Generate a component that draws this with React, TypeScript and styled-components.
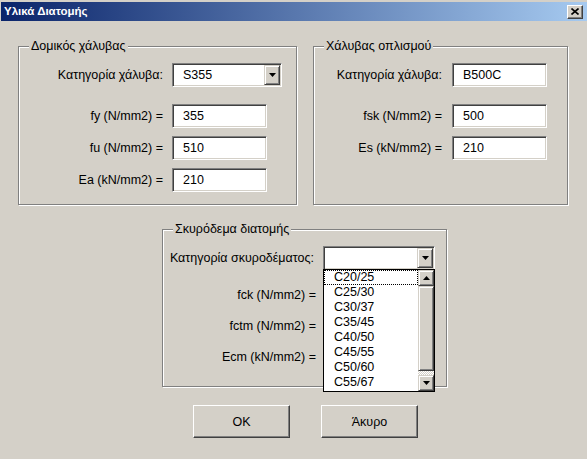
import React from "react";
import styled, { createGlobalStyle } from "styled-components";

const GlobalStyle = createGlobalStyle`
  html, body {
    margin: 0;
    padding: 0;
    background: #d4d0c8;
  }
  body {
    font-family: "Liberation Sans", Arial, sans-serif;
    font-size: 12.5px;
    color: #000;
    overflow: hidden;
  }
`;

const Window = styled.div`
  width: 587px;
  height: 459px;
  box-sizing: border-box;
  padding-top: 2px;
  background: #d4d0c8;
`;

const TitleBar = styled.div`
  height: 19px;
  margin-left: 1px;
  padding: 0 4px 0 3px;
  display: flex;
  align-items: center;
  justify-content: space-between;
  background: linear-gradient(to right, #0a246a, #a6caf0);
`;

const TitleText = styled.span`
  color: #fff;
  font-weight: bold;
  font-size: 11.5px;
  line-height: 19px;
`;

const CloseButton = styled.div`
  width: 16px;
  height: 14px;
  box-sizing: border-box;
  background: #d4d0c8;
  border: 1px solid;
  border-color: #fff #404040 #404040 #fff;
  box-shadow: inset -1px -1px #808080;
  display: flex;
  align-items: center;
  justify-content: center;
`;

const Body = styled.div`
  padding: 18px 0 0 18px;
`;

const TopRow = styled.div`
  display: flex;
  gap: 16px;
`;

const GroupBox = styled.fieldset<{ $w: number; $h: number; $ml?: number; $mt?: number }>`
  width: ${(p) => p.$w}px;
  height: ${(p) => p.$h}px;
  box-sizing: border-box;
  margin: ${(p) => p.$mt ?? 0}px 0 0 ${(p) => p.$ml ?? 0}px;
  padding: 10px 0 0 0;
  min-width: 0;
  border: 1px solid #808080;
  box-shadow: 1px 1px 0 #fff, inset 1px 1px 0 #fff;
`;

const Legend = styled.legend`
  margin-left: 10px;
  padding: 0 2px;
  line-height: 14px;
  background: #d4d0c8;
`;

const Row = styled.div<{ $mt?: number }>`
  display: flex;
  align-items: center;
  height: 24px;
  margin-top: ${(p) => p.$mt ?? 0}px;
`;

const Label = styled.span<{ $w: number; $gap: number }>`
  width: ${(p) => p.$w}px;
  margin-right: ${(p) => p.$gap}px;
  text-align: right;
  white-space: nowrap;
`;

const Sunken = styled.div<{ $w: number }>`
  width: ${(p) => p.$w}px;
  height: 24px;
  box-sizing: border-box;
  background: #fff;
  border: 1px solid;
  border-color: #808080 #fff #fff #808080;
  box-shadow: inset 1px 1px #404040, inset -1px -1px #d4d0c8;
  display: flex;
  align-items: center;
  position: relative;
`;

const Value = styled.span`
  flex: 1;
  padding-left: 10px;
`;

const Raised = styled.div`
  box-sizing: border-box;
  background: #d4d0c8;
  border: 1px solid;
  border-color: #d4d0c8 #404040 #404040 #d4d0c8;
  box-shadow: inset 1px 1px #fff, inset -1px -1px #808080;
  display: flex;
  align-items: center;
  justify-content: center;
`;

const DropButton = styled(Raised)`
  width: 16px;
  height: 20px;
  margin-right: 1px;
`;

const DropList = styled.div`
  position: absolute;
  top: 100%;
  left: -1px;
  width: 112px;
  height: 123px;
  box-sizing: border-box;
  border: 1px solid #000;
  background: #fff;
  display: flex;
  z-index: 5;
`;

const Items = styled.div`
  flex: 1;
  display: flex;
  flex-direction: column;
`;

const Item = styled.div<{ $focused?: boolean }>`
  height: 15px;
  line-height: 15px;
  padding-left: 10px;
  outline: ${(p) => (p.$focused ? "1px dotted #000" : "none")};
  outline-offset: -1px;
`;

const ScrollBar = styled.div`
  width: 16px;
  display: flex;
  flex-direction: column;
`;

const ScrollButton = styled(Raised)`
  height: 16px;
`;

const Thumb = styled(Raised)`
  height: 85px;
`;

const Track = styled.div`
  flex: 1;
  background: repeating-conic-gradient(#fff 0 25%, #d4d0c8 0 50%) 0 0 / 2px 2px;
`;

const ButtonRow = styled.div`
  display: flex;
  gap: 31px;
  margin: 18px 0 0 175px;
`;

const PushButton = styled.div`
  width: 97px;
  height: 33px;
  box-sizing: border-box;
  background: #d4d0c8;
  border: 1px solid;
  border-color: #fff #404040 #404040 #fff;
  box-shadow: inset -1px -1px #808080;
  display: flex;
  align-items: center;
  justify-content: center;
`;

const Arrow = ({ up }: { up?: boolean }) => (
  <svg width="7" height="4" viewBox="0 0 7 4">
    <polygon points={up ? "0,4 7,4 3.5,0" : "0,0 7,0 3.5,4"} fill="#000" />
  </svg>
);

const concrete = ["C20/25", "C25/30", "C30/37", "C35/45", "C40/50", "C45/55", "C50/60", "C55/67"];

export default function App() {
  return (
    <Window>
      <GlobalStyle />
      <TitleBar>
        <TitleText>Υλικά Διατομής</TitleText>
        <CloseButton>
          <svg width="8" height="7" viewBox="0 0 8 7">
            <path d="M0.5 0.5 L7.5 6.5 M7.5 0.5 L0.5 6.5" stroke="#000" strokeWidth="1.6" />
          </svg>
        </CloseButton>
      </TitleBar>
      <Body>
        <TopRow>
          <GroupBox $w={279} $h={166}>
            <Legend>Δομικός χάλυβας</Legend>
            <Row>
              <Label $w={144} $gap={9}>Κατηγορία χάλυβα:</Label>
              <Sunken $w={110}>
                <Value>S355</Value>
                <DropButton>
                  <Arrow />
                </DropButton>
              </Sunken>
            </Row>
            <Row $mt={17}>
              <Label $w={144} $gap={9}>fy (N/mm2) =</Label>
              <Sunken $w={95}>
                <Value>355</Value>
              </Sunken>
            </Row>
            <Row $mt={8}>
              <Label $w={144} $gap={9}>fu (N/mm2) =</Label>
              <Sunken $w={95}>
                <Value>510</Value>
              </Sunken>
            </Row>
            <Row $mt={8}>
              <Label $w={144} $gap={9}>Ea (kN/mm2) =</Label>
              <Sunken $w={95}>
                <Value>210</Value>
              </Sunken>
            </Row>
          </GroupBox>
          <GroupBox $w={255} $h={166}>
            <Legend>Χάλυβας οπλισμού</Legend>
            <Row>
              <Label $w={128} $gap={10}>Κατηγορία χάλυβα:</Label>
              <Sunken $w={95}>
                <Value>B500C</Value>
              </Sunken>
            </Row>
            <Row $mt={17}>
              <Label $w={128} $gap={10}>fsk (N/mm2) =</Label>
              <Sunken $w={95}>
                <Value>500</Value>
              </Sunken>
            </Row>
            <Row $mt={8}>
              <Label $w={128} $gap={10}>Es (kN/mm2) =</Label>
              <Sunken $w={95}>
                <Value>210</Value>
              </Sunken>
            </Row>
          </GroupBox>
        </TopRow>
        <GroupBox $w={285} $h={165} $ml={144} $mt={17}>
          <Legend>Σκυρόδεμα διατομής</Legend>
          <Row>
            <Label $w={151} $gap={9}>Κατηγορία σκυροδέματος:</Label>
            <Sunken $w={112}>
              <Value />
              <DropButton>
                <Arrow />
              </DropButton>
              <DropList>
                <Items>
                  {concrete.map((c, i) => (
                    <Item key={c} $focused={i === 0}>
                      {c}
                    </Item>
                  ))}
                </Items>
                <ScrollBar>
                  <ScrollButton>
                    <Arrow up />
                  </ScrollButton>
                  <Thumb />
                  <Track />
                  <ScrollButton>
                    <Arrow />
                  </ScrollButton>
                </ScrollBar>
              </DropList>
            </Sunken>
          </Row>
          <Row $mt={13}>
            <Label $w={153} $gap={7}>fck (N/mm2) =</Label>
            <Sunken $w={95} />
          </Row>
          <Row $mt={7}>
            <Label $w={153} $gap={7}>fctm (N/mm2) =</Label>
            <Sunken $w={95} />
          </Row>
          <Row $mt={7}>
            <Label $w={153} $gap={7}>Ecm (kN/mm2) =</Label>
            <Sunken $w={95} />
          </Row>
        </GroupBox>
        <ButtonRow>
          <PushButton>OK</PushButton>
          <PushButton>Άκυρο</PushButton>
        </ButtonRow>
      </Body>
    </Window>
  );
}
